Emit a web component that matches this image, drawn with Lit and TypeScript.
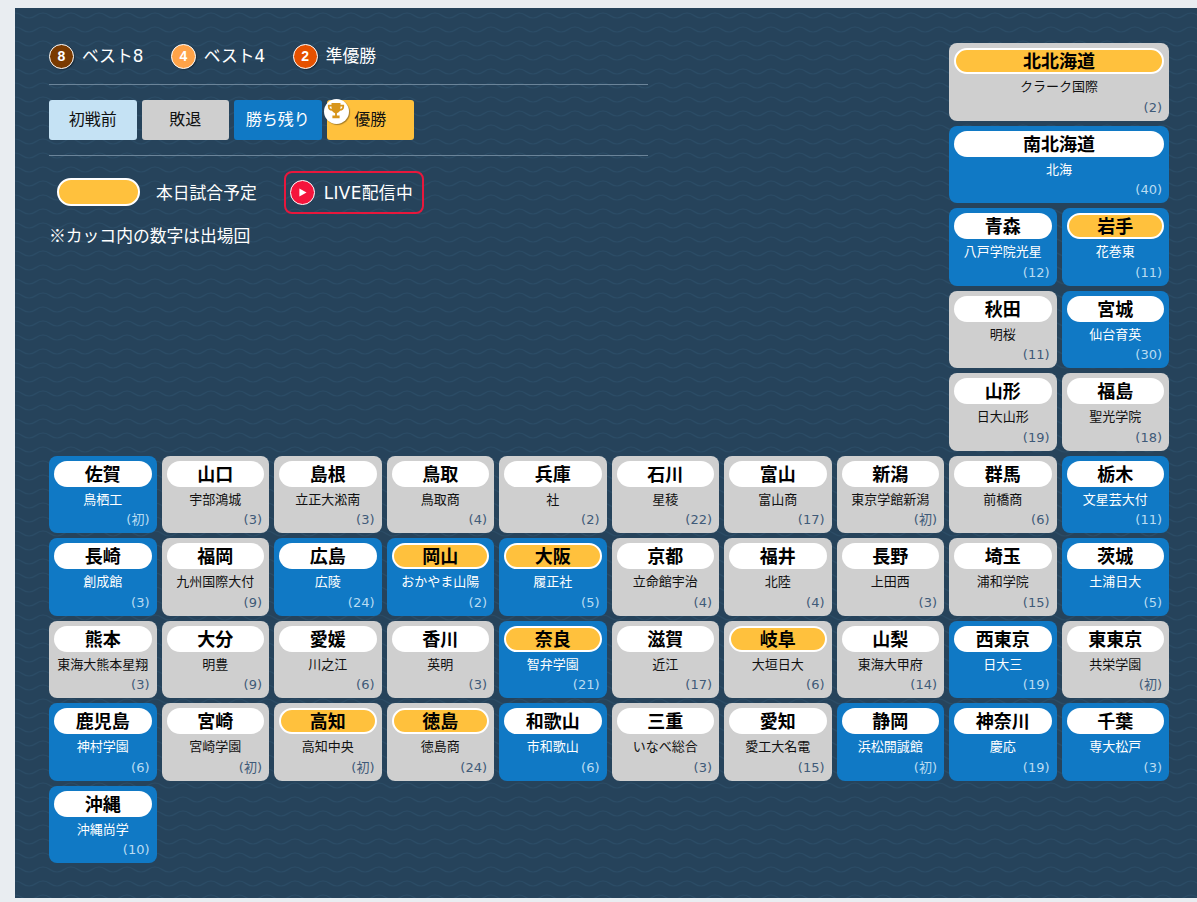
import { LitElement, html, css } from "lit";
import { customElement } from "lit/decorators.js";

type Team = [string, string, string, "g" | "b", boolean?];

const top: Team[] = [
  ["青森", "八戸学院光星", "12", "b"], ["岩手", "花巻東", "11", "b", true],
  ["秋田", "明桜", "11", "g"], ["宮城", "仙台育英", "30", "b"],
  ["山形", "日大山形", "19", "g"], ["福島", "聖光学院", "18", "g"],
];
const hokkaido: Team[] = [
  ["北北海道", "クラーク国際", "2", "g", true],
  ["南北海道", "北海", "40", "b"],
];
const rest: Team[] = [
  ["佐賀", "鳥栖工", "初", "b"], ["山口", "宇部鴻城", "3", "g"], ["島根", "立正大淞南", "3", "g"], ["鳥取", "鳥取商", "4", "g"], ["兵庫", "社", "2", "g"],
  ["石川", "星稜", "22", "g"], ["富山", "富山商", "17", "g"], ["新潟", "東京学館新潟", "初", "g"], ["群馬", "前橋商", "6", "g"], ["栃木", "文星芸大付", "11", "b"],
  ["長崎", "創成館", "3", "b"], ["福岡", "九州国際大付", "9", "g"], ["広島", "広陵", "24", "b"], ["岡山", "おかやま山陽", "2", "b", true], ["大阪", "履正社", "5", "b", true],
  ["京都", "立命館宇治", "4", "g"], ["福井", "北陸", "4", "g"], ["長野", "上田西", "3", "g"], ["埼玉", "浦和学院", "15", "g"], ["茨城", "土浦日大", "5", "b"],
  ["熊本", "東海大熊本星翔", "3", "g"], ["大分", "明豊", "9", "g"], ["愛媛", "川之江", "6", "g"], ["香川", "英明", "3", "g"], ["奈良", "智弁学園", "21", "b", true],
  ["滋賀", "近江", "17", "g"], ["岐阜", "大垣日大", "6", "g", true], ["山梨", "東海大甲府", "14", "g"], ["西東京", "日大三", "19", "b"], ["東東京", "共栄学園", "初", "g"],
  ["鹿児島", "神村学園", "6", "b"], ["宮崎", "宮崎学園", "初", "g"], ["高知", "高知中央", "初", "g", true], ["徳島", "徳島商", "24", "g", true], ["和歌山", "市和歌山", "6", "b"],
  ["三重", "いなべ総合", "3", "g"], ["愛知", "愛工大名電", "15", "g"], ["静岡", "浜松開誠館", "初", "b"], ["神奈川", "慶応", "19", "b"], ["千葉", "専大松戸", "3", "b"],
  ["沖縄", "沖縄尚学", "10", "b"],
];

const wave = `url("data:image/svg+xml,%3Csvg xmlns='http://www.w3.org/2000/svg' width='28' height='14'%3E%3Cpath fill='none' stroke='%232b4c66' stroke-width='1.200' d='M0 5c7 0 7 5 14 5s7-5 14-5'/%3E%3C/svg%3E")`;

@customElement("app-root")
export class AppRoot extends LitElement {
  static styles = css`
    :host {
      display: block;
      height: 902px;
      box-sizing: border-box;
      padding: 8px 0 4px 15px;
      background: #e9edf1;
      font-family: "DejaVu Sans", "Noto Sans CJK JP", sans-serif;
      overflow: hidden;
    }
    .panel {
      height: 890px;
      box-sizing: border-box;
      padding: 35.4px 28px 0 34px;
      background-color: #26435b;
      background-image: var(--wave);
    }
    .grid {
      display: grid;
      grid-template-columns: repeat(10, 107.5px);
      grid-auto-rows: 77.5px;
      gap: 5px;
    }
    .legend {
      grid-column: 1 / 9;
      grid-row: 1 / 6;
      width: 599px;
      padding-top: 0.6px;
      color: #fff;
      font-size: 16.8px;
    }
    .ranks {
      display: flex;
      align-items: center;
      height: 25px;
      padding-bottom: 15px;
      border-bottom: 1px solid #6b8499;
    }
    .rank { display: flex; align-items: center; gap: 8px; margin-right: 27.5px; line-height: 25px; }
    .dot {
      width: 25px;
      height: 25px;
      box-sizing: border-box;
      border-radius: 50%;
      border: 1.5px solid #fff;
      box-shadow: 1px 1px 1px rgba(0, 0, 0, 0.3);
      color: #fff;
      font: bold 14px/22px "Liberation Sans", sans-serif;
      text-align: center;
    }
    .d8 { background: #7a3a00; }
    .d4 { background: #ffa348; }
    .d2 { background: #e65100; }
    .states {
      display: flex;
      gap: 5px;
      padding: 15px 0;
      border-bottom: 1px solid #6b8499;
    }
    .state {
      position: relative;
      width: 87.5px;
      height: 40px;
      border-radius: 3px;
      font-size: 16px;
      line-height: 40px;
      text-align: center;
      color: #111;
    }
    .pre { background: #c5e2f4; }
    .lost { background: #cfcfcf; }
    .alive { background: #1079c5; color: #fff; }
    .champ { background: #ffc13d; }
    .trophy {
      position: absolute;
      left: -3px;
      top: -1px;
      width: 25px;
      height: 25px;
      border-radius: 50%;
      background: #fff;
      box-shadow: 1px 1px 1px rgba(0, 0, 0, 0.35);
      display: flex;
      align-items: center;
      justify-content: center;
    }
    .today {
      display: flex;
      align-items: center;
      margin-top: 15px;
      height: 43px;
    }
    .sample {
      width: 83px;
      height: 28px;
      box-sizing: border-box;
      margin: 0 16px 0 8px;
      border-radius: 14px;
      background: #ffc13d;
      border: 2px solid #fff;
    }
    .live {
      display: flex;
      align-items: center;
      gap: 9px;
      width: 140px;
      height: 43px;
      box-sizing: border-box;
      margin-left: 27px;
      padding-left: 4px;
      border: 2px solid #e8173c;
      border-radius: 8px;
      white-space: nowrap;
    }
    .live-text { letter-spacing: 0.4px; }
    .play {
      flex: none;
      width: 25px;
      height: 25px;
      box-sizing: border-box;
      border-radius: 50%;
      background: #f5143c;
      border: 1.5px solid #fff;
      display: flex;
      align-items: center;
      justify-content: center;
    }
    .note { margin-top: 9px; line-height: 24px; font-family: "Noto Sans CJK JP", sans-serif; }
    .card {
      box-sizing: border-box;
      padding: 5px;
      border-radius: 8px;
      position: relative;
      text-align: center;
    }
    .card.g { background: #cfcfcf; color: #111; }
    .card.b { background: #1079c5; color: #fff; }
    .wide { grid-column: span 2; }
    .pref {
      height: 26px;
      box-sizing: border-box;
      border-radius: 13px;
      background: #fff;
      color: #000;
      font-size: 18px;
      font-weight: 700;
      line-height: 28px;
    }
    .pref.on { background: #ffc13d; border: 2px solid #fff; line-height: 24px; }
    .school {
      font-size: 13px;
      line-height: 17px;
      margin-top: 4px;
      white-space: nowrap;
    }
    .count {
      position: absolute;
      right: 7px;
      bottom: 4px;
      font-size: 13px;
      line-height: 18px;
    }
    .g .count { color: #3f5a78; }
    .b .count { color: #b9dcf2; }
  `;

  private card(t: Team, wide = false) {
    return html`<div class="card ${t[3]} ${wide ? "wide" : ""}">
      <div class="pref ${t[4] ? "on" : ""}">${t[0]}</div>
      <div class="school">${t[1]}</div>
      <div class="count">(${t[2]})</div>
    </div>`;
  }

  render() {
    return html`<div class="panel" style="--wave:${wave}">
      <div class="grid">
        <div class="legend">
          <div class="ranks">
            <div class="rank"><span class="dot d8">8</span>ベスト8</div>
            <div class="rank"><span class="dot d4">4</span>ベスト4</div>
            <div class="rank"><span class="dot d2">2</span>準優勝</div>
          </div>
          <div class="states">
            <div class="state pre">初戦前</div>
            <div class="state lost">敗退</div>
            <div class="state alive">勝ち残り</div>
            <div class="state champ">
              <span class="trophy">
                <svg width="18" height="18" viewBox="0 0 20 20">
                  <path fill="#d8951a" d="M5 1h10v2h4v2.500c0 2.500-2 4-4.500 4.300C13.600 11 12.500 12 11 12.400V15h3v3H6v-3h3v-2.600C7.500 12 6.400 11 5.500 9.800 3 9.500 1 8 1 5.500V3h4zM3 5v.5c0 1.200.9 2 2.200 2.300C5.100 7 5 6 5 5zm12 0c0 1-.1 2-.2 2.800C16.100 7.500 17 6.700 17 5.500V5z"/>
                </svg>
              </span>優勝
            </div>
          </div>
          <div class="today">
            <span class="sample"></span>
            <span>本日試合予定</span>
            <div class="live">
              <span class="play">
                <svg width="9" height="9" viewBox="0 0 10 10"><path fill="#fff" d="M1.500 0.500 9.500 5l-8 4.500z"/></svg>
              </span>
              <span class="live-text">LIVE配信中</span>
            </div>
          </div>
          <div class="note">※カッコ内の数字は出場回</div>
        </div>
        ${hokkaido.map((t) => this.card(t, true))}
        ${top.map((t) => this.card(t))}
        ${rest.map((t) => this.card(t))}
      </div>
    </div>`;
  }
}
